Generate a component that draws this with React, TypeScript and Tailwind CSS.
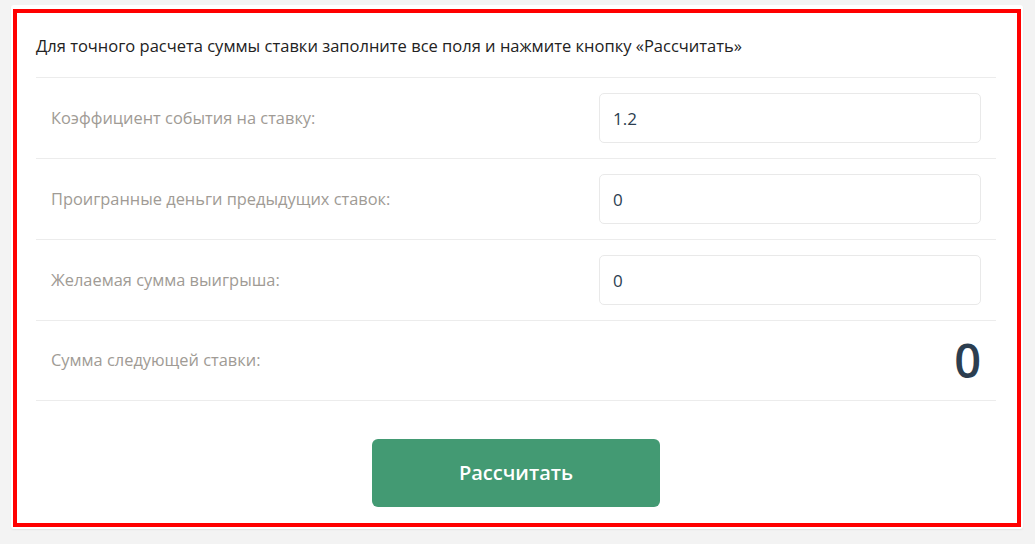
import React from "react";

const rows = [
  { label: "Коэффициент события на ставку:", value: "1.2" },
  { label: "Проигранные деньги предыдущих ставок:", value: "0" },
  { label: "Желаемая сумма выигрыша:", value: "0" },
];

export default function App() {
  return (
    <div className="min-h-[544px] w-full bg-[#f3f3f3] pt-[5px] pl-[11px] pr-[12px] font-['Open_Sans','Noto_Sans',sans-serif]">
      <div className="rounded-[3px] bg-white p-[2px] shadow-[0_1px_2px_rgba(0,0,0,0.06)]">
        <div className="mt-[2px] border-4 border-[#ff0000] pl-[19px] pr-[21px] pb-[16px]">
          <div className="pt-[21px] pb-[19px] text-[16.5px] leading-[24px] text-[#222]">
            Для точного расчета суммы ставки заполните все поля и нажмите кнопку «Рассчитать»
          </div>
          {rows.map((r) => (
            <div
              key={r.label}
              className="flex h-[81px] items-center justify-between border-t border-[#ececec] pl-[15px] pr-[15px]"
            >
              <span className="text-[16.4px] text-[#a09b95]">{r.label}</span>
              <input
                readOnly
                value={r.value}
                className="h-[50px] w-[382px] rounded-[5px] border border-[#e9e9e9] px-[13px] text-[17px] text-[#2c3e50] outline-none"
              />
            </div>
          ))}
          <div className="flex h-[81px] items-center justify-between border-t border-b border-[#ececec] pl-[15px] pr-[15px]">
            <span className="text-[16.4px] text-[#a09b95]">Сумма следующей ставки:</span>
            <span className="text-[47px] font-semibold leading-none text-[#2c3e50]">0</span>
          </div>
          <div className="flex justify-center pt-[38px]">
            <button className="h-[68px] w-[288px] rounded-[6px] bg-[#439a73] text-[20px] font-semibold text-white">
              Рассчитать
            </button>
          </div>
        </div>
      </div>
    </div>
  );
}
